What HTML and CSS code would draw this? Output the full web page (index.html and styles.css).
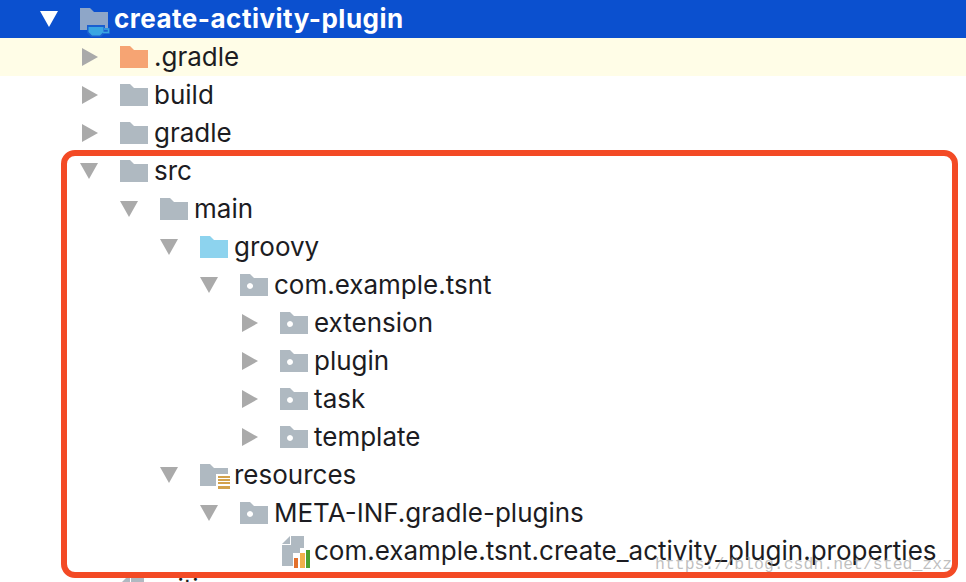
FILE: index.html
```html
<!DOCTYPE html>
<html lang="en">
<head>
    <meta charset="UTF-8">
    <meta name="viewport" content="width=device-width, initial-scale=1.0">
    <title>Project Tree</title>
    <link rel="stylesheet" href="styles.css">
</head>
<body>
    <svg class="sprites" xmlns="http://www.w3.org/2000/svg">
        <symbol id="folder" viewBox="0 0 28 22"><path d="M0 0H10L14 4H28V22H0Z"/></symbol>
        <symbol id="package" viewBox="0 0 28 22"><path fill-rule="evenodd" d="M0 0H10L14 4H28V22H0ZM10 9a3 3 0 1 0 0.01 0Z"/></symbol>
        <symbol id="right" viewBox="0 0 16 18"><path d="M0 0L16 9L0 18Z"/></symbol>
        <symbol id="down" viewBox="0 0 18 16"><path d="M0 0H18L9 16Z"/></symbol>
    </svg>

    <div class="tree">
        <div class="row selected depth-0">
            <svg class="twisty down"><use href="#down"/></svg>
            <svg class="icon root-icon" viewBox="0 0 32 30">
                <path fill="#8ea6c8" d="M0 0H10L14 4H28V22H0Z"/>
                <path fill="#1a5fd0" d="M7 17H25V20H30V26H24L21 29H11L7 25Z"/>
                <path fill="#3aa6e2" d="M8.500 19H23.500V24L20 27.500H12L8.500 24Z"/>
                <path fill="none" stroke="#3aa6e2" stroke-width="1.500" d="M24 21H28.500V24.500H23"/>
            </svg>
            <span class="name">create-activity-plugin</span>
        </div>
        <div class="row ignored depth-1">
            <svg class="twisty right"><use href="#right"/></svg>
            <svg class="icon excluded"><use href="#folder"/></svg>
            <span class="name">.gradle</span>
        </div>
        <div class="row depth-1">
            <svg class="twisty right"><use href="#right"/></svg>
            <svg class="icon"><use href="#folder"/></svg>
            <span class="name">build</span>
        </div>
        <div class="row depth-1">
            <svg class="twisty right"><use href="#right"/></svg>
            <svg class="icon"><use href="#folder"/></svg>
            <span class="name">gradle</span>
        </div>
        <div class="row depth-1">
            <svg class="twisty down"><use href="#down"/></svg>
            <svg class="icon"><use href="#folder"/></svg>
            <span class="name">src</span>
        </div>
        <div class="row depth-2">
            <svg class="twisty down"><use href="#down"/></svg>
            <svg class="icon"><use href="#folder"/></svg>
            <span class="name">main</span>
        </div>
        <div class="row depth-3">
            <svg class="twisty down"><use href="#down"/></svg>
            <svg class="icon source"><use href="#folder"/></svg>
            <span class="name">groovy</span>
        </div>
        <div class="row depth-4">
            <svg class="twisty down"><use href="#down"/></svg>
            <svg class="icon"><use href="#package"/></svg>
            <span class="name">com.example.tsnt</span>
        </div>
        <div class="row depth-5">
            <svg class="twisty right"><use href="#right"/></svg>
            <svg class="icon"><use href="#package"/></svg>
            <span class="name">extension</span>
        </div>
        <div class="row depth-5">
            <svg class="twisty right"><use href="#right"/></svg>
            <svg class="icon"><use href="#package"/></svg>
            <span class="name">plugin</span>
        </div>
        <div class="row depth-5">
            <svg class="twisty right"><use href="#right"/></svg>
            <svg class="icon"><use href="#package"/></svg>
            <span class="name">task</span>
        </div>
        <div class="row depth-5">
            <svg class="twisty right"><use href="#right"/></svg>
            <svg class="icon"><use href="#package"/></svg>
            <span class="name">template</span>
        </div>
        <div class="row depth-3">
            <svg class="twisty down"><use href="#down"/></svg>
            <svg class="icon res-icon" viewBox="0 0 32 28">
                <path fill="#afb9c1" d="M0 0H10L14 4H28V10H16V22H0Z"/>
                <path fill="#d3a24c" d="M18 12H30V14H18ZM18 15H30V17H18ZM18 18H30V20H18ZM18 22H30V25H18Z"/>
            </svg>
            <span class="name">resources</span>
        </div>
        <div class="row depth-4">
            <svg class="twisty down"><use href="#down"/></svg>
            <svg class="icon"><use href="#package"/></svg>
            <span class="name">META-INF.gradle-plugins</span>
        </div>
        <div class="row depth-5 leaf">
            <svg class="icon file-icon" viewBox="0 0 30 32">
                <path fill="#afb9c1" d="M0 8L8 0V8Z"/>
                <path fill="#afb9c1" d="M9 0H22V12H18V17H11V30H0V9H9Z"/>
                <path fill="#e2702c" d="M12 22H16V32H12Z"/>
                <path fill="#efb04a" d="M18 17H23V32H18Z"/>
                <path fill="#4aa02c" d="M24 14H28V32H24Z"/>
            </svg>
            <span class="name">com.example.tsnt.create_activity_plugin.properties</span>
        </div>
        <div class="row depth-1 leaf">
            <svg class="icon file-icon" viewBox="0 0 30 32">
                <path fill="#afb9c1" d="M0 8L8 0V8Z"/>
                <path fill="#afb9c1" d="M9 0H22V30H0V9H9Z"/>
            </svg>
            <span class="name">.gitignore</span>
        </div>
    </div>

    <div class="frame"></div>
    <div class="watermark">https://blog.csdn.net/sted_zxz</div>
</body>
</html>
```

FILE: styles.css
```css
html, body {
    margin: 0;
    padding: 0;
    height: 100%;
    overflow: hidden;
    background: #fff;
}
body {
    position: relative;
    font-family: "Inter", "Noto Sans", sans-serif;
}
.sprites {
    position: absolute;
    width: 0;
    height: 0;
}
.row {
    display: flex;
    align-items: center;
    height: 38px;
    font-size: 26px;
    color: #1c1c22;
    white-space: nowrap;
}
.name {
    margin-bottom: 2px;
}
.selected {
    background: #0b50cf;
    color: #fff;
    font-weight: 700;
    letter-spacing: 0.5px;
}
.ignored {
    background: #fffde7;
}
.depth-0 { padding-left: 40px; }
.depth-1 { padding-left: 80px; }
.depth-2 { padding-left: 120px; }
.depth-3 { padding-left: 160px; }
.depth-4 { padding-left: 200px; }
.depth-5 { padding-left: 240px; }
.depth-5.leaf { padding-left: 282px; }
.depth-1.leaf { padding-left: 122px; }
.twisty {
    flex: none;
    fill: #aaa;
}
.twisty.right {
    width: 16px;
    height: 18px;
    margin: 0 22px 0 2px;
}
.twisty.down {
    width: 18px;
    height: 16px;
    margin-right: 22px;
}
.selected .twisty {
    fill: #fff;
}
.icon {
    flex: none;
    width: 28px;
    height: 22px;
    margin-right: 6px;
    fill: #afb9c1;
}
.excluded { fill: #f6a473; }
.source { fill: #8dd3ee; }
.root-icon {
    width: 32px;
    height: 30px;
    margin: 8px 2px 0 0;
}
.res-icon {
    width: 32px;
    height: 28px;
    margin: 6px 2px 0 0;
}
.file-icon {
    width: 30px;
    height: 32px;
    margin: 2px 2px 0 0;
}
.frame {
    position: absolute;
    left: 61px;
    top: 150px;
    width: 897px;
    height: 428px;
    box-sizing: border-box;
    border: 6px solid #f34a25;
    border-radius: 14px;
}
.watermark {
    position: absolute;
    left: 655px;
    top: 555px;
    font-family: "Liberation Mono", monospace;
    font-size: 16.500px;
    color: rgba(150, 150, 150, 0.6);
}
```
